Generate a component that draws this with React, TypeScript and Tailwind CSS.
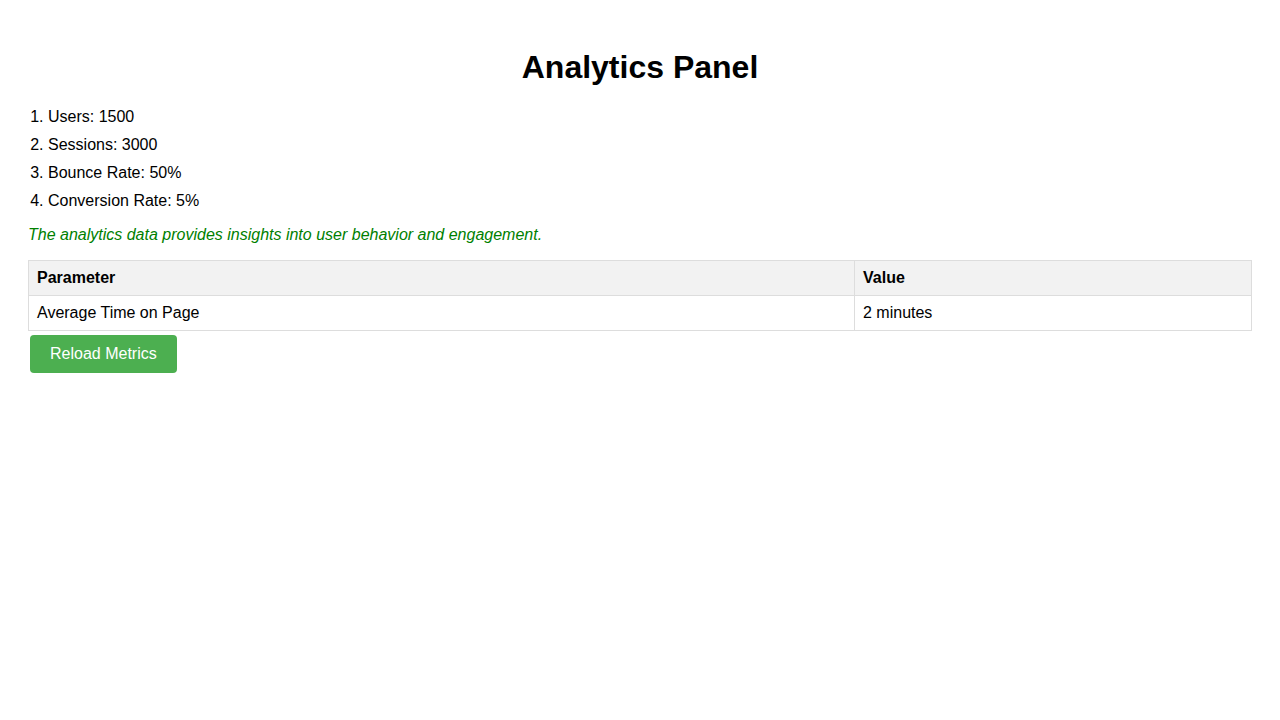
import React from "react";

export default function App() {
  const items = ["Users: 1500", "Sessions: 3000", "Bounce Rate: 50%", "Conversion Rate: 5%"];
  return (
    <div
      className="min-h-[720px] bg-white px-[28px] text-black"
      style={{ fontFamily: '"Liberation Sans", Arial, sans-serif' }}
    >
      <h1 className="pt-[49px] text-center text-[32px] font-bold leading-[37px]">Analytics Panel</h1>
      <ol className="mt-[17px] list-decimal pl-[20px] text-[16px]">
        {items.map((t) => (
          <li key={t} className="leading-[28px]">
            {t}
          </li>
        ))}
      </ol>
      <p className="mt-[11px] text-[16px] italic leading-[18px] text-[#008000]">
        The analytics data provides insights into user behavior and engagement.
      </p>
      <table className="mt-[16px] w-full border-collapse text-[16px] leading-[18px]">
        <thead>
          <tr className="bg-[#f2f2f2]">
            <th className="w-[826px] border border-[#dddddd] px-[8px] py-[8px] text-left font-bold">Parameter</th>
            <th className="border border-[#dddddd] px-[8px] py-[8px] text-left font-bold">Value</th>
          </tr>
        </thead>
        <tbody>
          <tr>
            <td className="border border-[#dddddd] px-[8px] py-[8px]">Average Time on Page</td>
            <td className="border border-[#dddddd] px-[8px] py-[8px]">2 minutes</td>
          </tr>
        </tbody>
      </table>
      <button className="ml-[2px] mt-[4px] rounded-[4px] bg-[#4caf50] px-[20px] py-[10px] text-[16px] leading-[18px] text-white">
        Reload Metrics
      </button>
    </div>
  );
}
